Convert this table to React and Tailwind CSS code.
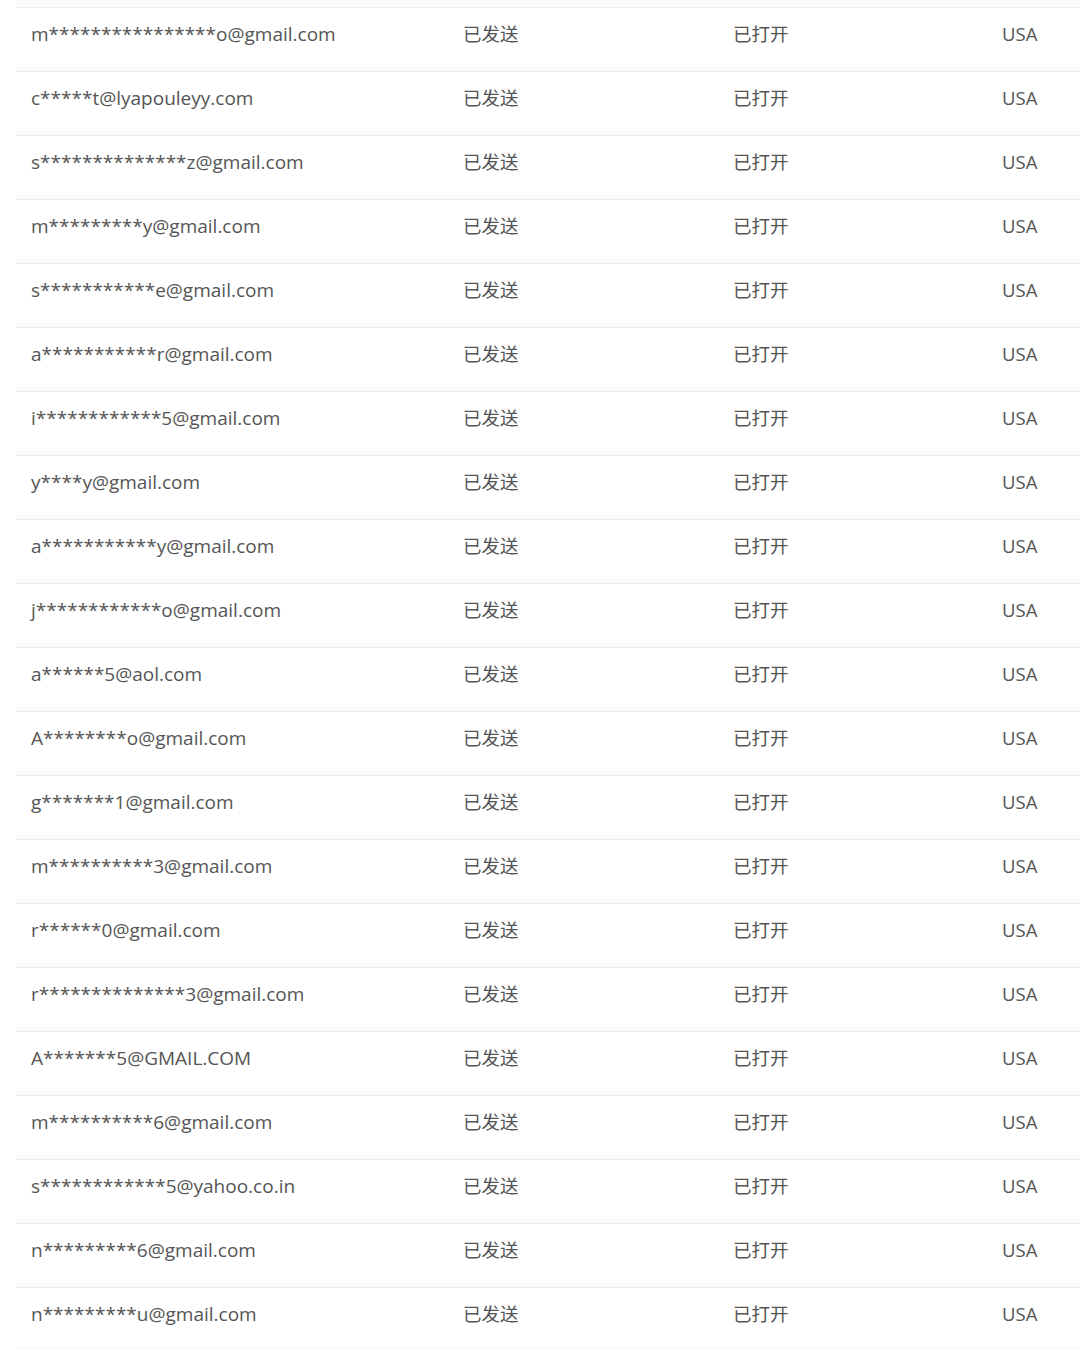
import React from 'react';

const emails = [
  'm****************o@gmail.com',
  'c*****t@lyapouleyy.com',
  's**************z@gmail.com',
  'm*********y@gmail.com',
  's***********e@gmail.com',
  'a***********r@gmail.com',
  'i************5@gmail.com',
  'y****y@gmail.com',
  'a***********y@gmail.com',
  'j************o@gmail.com',
  'a******5@aol.com',
  'A********o@gmail.com',
  'g*******1@gmail.com',
  'm**********3@gmail.com',
  'r******0@gmail.com',
  'r**************3@gmail.com',
  'A*******5@GMAIL.COM',
  'm**********6@gmail.com',
  's************5@yahoo.co.in',
  'n*********6@gmail.com',
  'n*********u@gmail.com',
];

function Row({ email }) {
  return (
    <div className="h-[64px] flex flex-col">
      <div className="flex-1 grid grid-cols-[432px_270px_269px_1fr] items-center pb-[6px] text-[#555]">
        <div className="px-[15px] text-[19px]">{email}</div>
        <div className="px-[15px] text-[18.5px]">已发送</div>
        <div className="px-[15px] text-[18.5px]">已打开</div>
        <div className="px-[15px] text-[18.5px]">USA</div>
      </div>
      <div className="h-[5px] bg-[#fafafa]" />
      <div className="h-[1px] bg-[#ebebeb]" />
    </div>
  );
}

export default function App() {
  return (
    <div className="bg-white w-[1080px] h-[1349px] overflow-hidden" style={{ fontFamily: '"Open Sans", "Noto Sans CJK SC", sans-serif' }}>
      <div className="ml-[16px]">
        <div className="h-[8px] flex flex-col">
          <div className="flex-1 bg-[#fafafa]" />
          <div className="h-[1px] bg-[#ebebeb]" />
        </div>
        {emails.map((e, i) => (
          <Row key={i} email={e} />
        ))}
      </div>
    </div>
  );
}
